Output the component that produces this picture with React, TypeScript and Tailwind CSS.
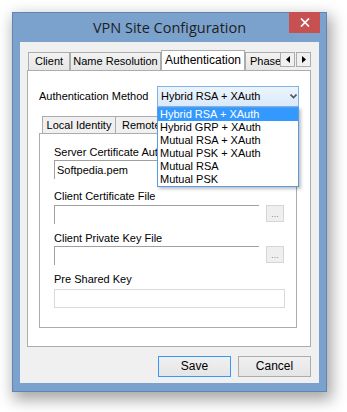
import React from 'react';

const methods = [
    'Hybrid RSA + XAuth',
    'Hybrid GRP + XAuth',
    'Mutual RSA + XAuth',
    'Mutual PSK + XAuth',
    'Mutual RSA',
    'Mutual PSK',
];

function TopTab({ label, className, active = false }: { label: string; className: string; active?: boolean }) {
    return (
        <div
            className={`flex shrink-0 items-center justify-center overflow-hidden whitespace-nowrap border border-b-0 border-[#acacac] ${
                active ? 'relative z-10 -mb-px h-[21px] bg-white pb-[2px]' : 'h-[18px] bg-gradient-to-b from-[#f2f2f2] to-[#e6e6e6]'
            } ${className}`}
        >
            {label}
        </div>
    );
}

function PathField({ value = '' }: { value?: string }) {
    return (
        <div className="flex items-start gap-[7px]">
            <div className="h-[19px] w-[205px] border-l border-t border-[#a0a0a0] bg-white pl-[2px] leading-[19px]">{value}</div>
            <div className="flex h-[17px] w-[18px] items-end justify-center border border-[#d5d5d5] bg-[#efefef] pb-[2px] text-[9px] leading-[9px] text-[#8a8a8a]">
                ...
            </div>
        </div>
    );
}

export default function App() {
    return (
        <div className="h-[412px] w-[347px] overflow-hidden bg-white pl-[12px] pt-[12px] font-['Liberation_Sans',Arial,sans-serif] text-[11px] leading-[13px] text-black">
            {/* Window */}
            <div className="relative flex h-[380px] w-[315px] flex-col border border-[#5f86b2] bg-[#7ba2cd] px-[7px] pb-[8px] shadow-[3px_6px_14px_2px_rgba(0,0,0,0.35)]">
                {/* Title bar */}
                <div className="flex h-[29px] shrink-0 items-center justify-center pb-[1px] font-['Open_Sans',sans-serif] text-[14.5px] text-[#1e1e1e]">
                    VPN Site Configuration
                </div>
                <div className="absolute -top-px right-[6px] flex h-[21px] w-[31px] items-center justify-center bg-[#c75050]">
                    <svg width="10" height="9" viewBox="0 0 10 9">
                        <path d="M1 0.5 L9 8.5 M9 0.5 L1 8.5" stroke="#fff" strokeWidth="1.7" />
                    </svg>
                </div>

                {/* Client area */}
                <div className="flex flex-1 flex-col bg-[#f0f0f0] pl-[7px] pr-[8px] pt-[8px]">
                    {/* Tab strip */}
                    <div className="flex h-[20px] items-end">
                        <div className="flex flex-1 items-end overflow-hidden pl-[1px]">
                            <TopTab label="Client" className="w-[42px]" />
                            <TopTab label="Name Resolution" className="w-[91px]" />
                            <TopTab label="Authentication" className="w-[84px] text-[12px]" active />
                            <TopTab label="Phase 1" className="w-[60px] justify-start pl-[4px]" />
                        </div>
                        <div className="mb-[3px] flex gap-px">
                            {['left', 'right'].map((dir) => (
                                <div key={dir} className="flex h-[15px] w-[15px] items-center justify-center border border-[#acacac] bg-[#f0f0f0]">
                                    <svg width="4" height="7" viewBox="0 0 4 7">
                                        {dir === 'left' ? <path d="M4 0 L0 3.5 L4 7 Z" fill="#000" /> : <path d="M0 0 L4 3.5 L0 7 Z" fill="#000" />}
                                    </svg>
                                </div>
                            ))}
                        </div>
                    </div>

                    {/* Tab panel */}
                    <div className="flex h-[277px] flex-col border border-[#acacac] bg-white">
                        {/* Authentication method */}
                        <div className="mt-[15px] flex items-center pl-[11px] pr-[11px]">
                            <span className="flex-1">Authentication Method</span>
                            <div className="relative z-20 w-[142px]">
                                <div className="flex h-[21px] items-center border border-[#7eb4ea] bg-gradient-to-b from-[#ecf4fc] to-[#d9eafb] pl-[3px] pr-[1px]">
                                    <span className="flex-1">Hybrid RSA + XAuth</span>
                                    <svg width="7" height="5" viewBox="0 0 7 5">
                                        <path d="M0.5 0.5 L3.5 3.5 L6.5 0.5" stroke="#555" strokeWidth="1.6" fill="none" />
                                    </svg>
                                </div>
                                <div className="absolute left-0 top-full w-[142px] border border-[#569de5] bg-white shadow-[2px_2px_3px_rgba(0,0,0,0.25)]">
                                    {methods.map((m, i) => (
                                        <div key={m} className={`h-[13px] pl-[2px] leading-[13px] ${i === 0 ? 'bg-[#3399ff] text-white' : ''}`}>
                                            {m}
                                        </div>
                                    ))}
                                </div>
                            </div>
                        </div>

                        {/* Identity tabs */}
                        <div className="ml-[11px] mr-[13px] mt-[9px] flex flex-col">
                            <div className="flex h-[17px] items-end pl-[3px]">
                                <div className="flex h-[17px] w-[74px] items-center justify-center border border-b-0 border-[#acacac] bg-[#f0f0f0]">
                                    Local Identity
                                </div>
                                <div className="flex h-[17px] w-[84px] items-center justify-start border border-b-0 border-l-0 border-[#acacac] bg-[#f0f0f0] pl-[6px] whitespace-nowrap">
                                    Remote Identity
                                </div>
                            </div>
                            <div className="flex h-[195px] flex-col border border-[#acacac] bg-white pl-[14px]">
                                <span className="mt-[12px] h-[13px] whitespace-nowrap">Server Certificate Autority File</span>
                                <div className="mt-[1px]">
                                    <PathField value="Softpedia.pem" />
                                </div>
                                <span className="mt-[11px] h-[13px]">Client Certificate File</span>
                                <div className="mt-[2px]">
                                    <PathField />
                                </div>
                                <span className="mt-[8px] h-[13px]">Client Private Key File</span>
                                <div className="mt-[1px]">
                                    <PathField />
                                </div>
                                <span className="mt-[8px] h-[13px]">Pre Shared Key</span>
                                <div className="mt-[3px] h-[19px] w-[231px] border border-[#d9d9d9] bg-white" />
                            </div>
                        </div>
                    </div>

                    {/* Buttons */}
                    <div className="mt-[9px] flex justify-end gap-[7px]">
                        <button className="flex h-[21px] w-[73px] items-center justify-center border border-[#3399ff] bg-gradient-to-b from-[#f0f0f0] to-[#e5e5e5] text-[12px]">
                            Save
                        </button>
                        <button className="flex h-[21px] w-[73px] items-center justify-center border border-[#acacac] bg-gradient-to-b from-[#f0f0f0] to-[#e5e5e5] text-[12px]">
                            Cancel
                        </button>
                    </div>
                </div>
            </div>
        </div>
    );
}
